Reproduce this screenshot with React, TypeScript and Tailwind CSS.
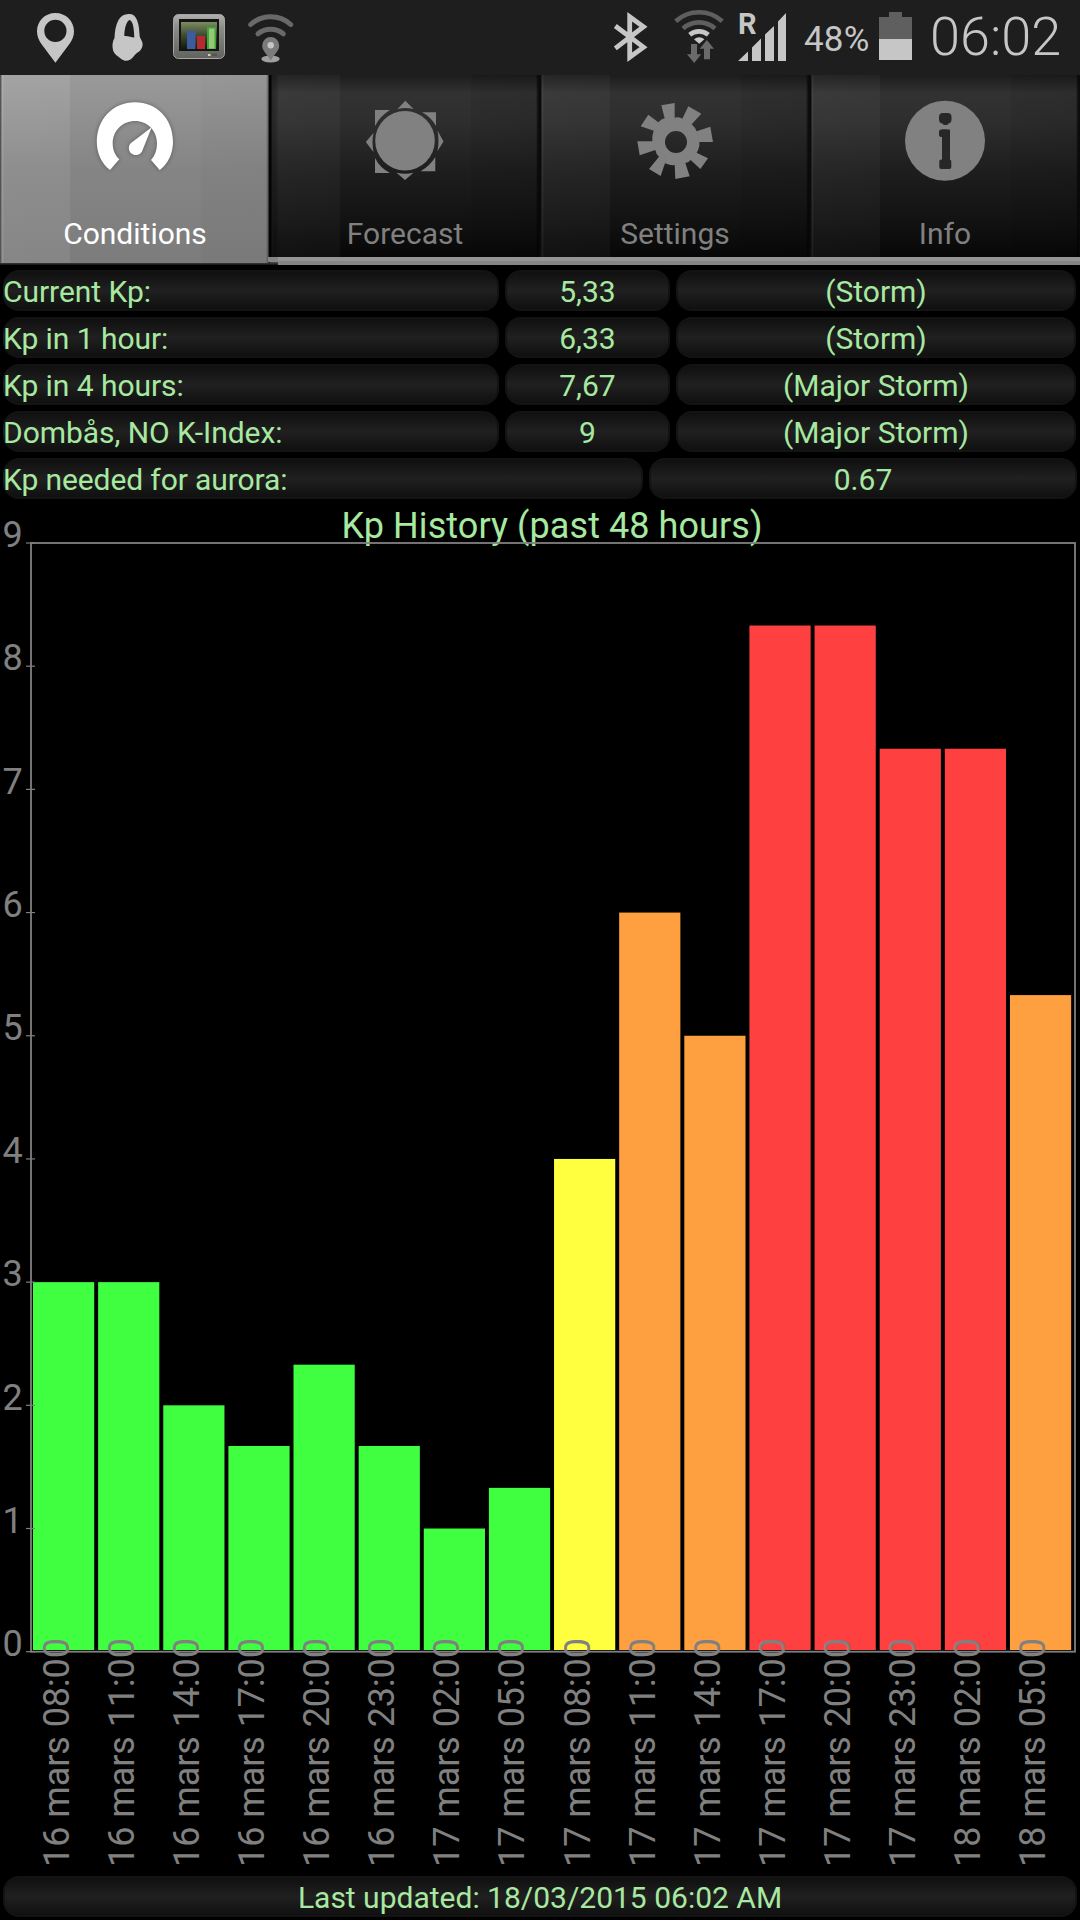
import type { ReactNode } from 'react'
import { clsx } from 'clsx'

const history = [
  { label: '16 mars 08:00', kp: 3 },
  { label: '16 mars 11:00', kp: 3 },
  { label: '16 mars 14:00', kp: 2 },
  { label: '16 mars 17:00', kp: 1.67 },
  { label: '16 mars 20:00', kp: 2.33 },
  { label: '16 mars 23:00', kp: 1.67 },
  { label: '17 mars 02:00', kp: 1 },
  { label: '17 mars 05:00', kp: 1.33 },
  { label: '17 mars 08:00', kp: 4 },
  { label: '17 mars 11:00', kp: 6 },
  { label: '17 mars 14:00', kp: 5 },
  { label: '17 mars 17:00', kp: 8.33 },
  { label: '17 mars 20:00', kp: 8.33 },
  { label: '17 mars 23:00', kp: 7.33 },
  { label: '18 mars 02:00', kp: 7.33 },
  { label: '18 mars 05:00', kp: 5.33 },
]

const readings = [
  { label: 'Current Kp:', value: '5,33', level: '(Storm)' },
  { label: 'Kp in 1 hour:', value: '6,33', level: '(Storm)' },
  { label: 'Kp in 4 hours:', value: '7,67', level: '(Major Storm)' },
  { label: 'Dombås, NO K-Index:', value: '9', level: '(Major Storm)' },
]

function barColor(kp: number) {
  if (kp >= 7) return '#ff4040'
  if (kp >= 5) return '#ffa040'
  if (kp >= 4) return '#ffff40'
  return '#40ff40'
}

function StatusBar() {
  return (
    <header className="flex h-[75px] items-start bg-[#1e1e1e] text-[#c6c6c6]">
      {/* location pin */}
      <svg className="ml-9 shrink-0" width="40" height="75" viewBox="36 0 40 75">
        <path
          fill="#c6c6c6"
          fillRule="evenodd"
          d="M55.4 13C45 13 37 21 37 31.4c0 5 2 9 4.400 12.600L55.400 62.700l14-18.700c2.600-3.600 4.600-7.600 4.600-12.600C74 21 65.800 13 55.400 13zm0 6.800a11.100 11.100 0 1 1 0 22.200a11.100 11.100 0 0 1 0-22.200z"
        />
      </svg>
      <svg className="ml-8 shrink-0" width="40" height="75" viewBox="108 0 40 75">
        <path
          fill="#c6c6c6"
          fillRule="evenodd"
          d="M130 14c-5-.6-9 1.500-11.500 6c-3 5.500-3.700 11.500-4 18c-2 3-2.600 8-1.500 12c1 4 4 5.500 7 8c3.500 3 6.500 3.600 10 1.800c3-2 4.500-5 7.500-7.300c4-2 5.500-6 5-9.500c-.6-2.500-2-4-2.800-6.500c-.5-6-.5-11-2.700-16.500c-1.400-3.500-3.500-5.600-7-6zM129.500 20c3 1 4.500 6 4.800 17.500c-3.500 0-5.500-1.800-10-1.500c.2-7 1.700-14.500 5.200-16z"
        />
      </svg>
      {/* system monitor */}
      <svg className="ml-6 shrink-0" width="54" height="75" viewBox="172 0 54 75">
        <defs>
          <linearGradient id="bezel" x1="0" y1="0" x2="0" y2="1">
            <stop offset="0" stopColor="#b0b0ad" />
            <stop offset="0.3" stopColor="#8b8b87" />
            <stop offset="1" stopColor="#62625f" />
          </linearGradient>
          <linearGradient id="screen" x1="0" y1="0" x2="0" y2="1">
            <stop offset="0" stopColor="#7c8a64" />
            <stop offset="0.5" stopColor="#3e4a2e" />
            <stop offset="1" stopColor="#12180c" />
          </linearGradient>
        </defs>
        <rect x="173.500" y="14.500" width="51" height="44" rx="5" fill="url(#bezel)" stroke="#a5a5a2" />
        <rect x="179" y="19" width="40" height="32" fill="#141414" />
        <rect x="181" y="22" width="36" height="27" fill="url(#screen)" />
        <rect x="187" y="31" width="8.500" height="18" fill="#3c5c9e" />
        <rect x="197" y="36" width="8" height="13" fill="#b52a32" />
        <rect x="207" y="27" width="9" height="22" fill="#3fa535" />
        <rect x="209" y="28.500" width="5.500" height="20" fill="#93c878" />
        <rect x="208" y="54" width="2.500" height="2" fill="#bde08a" />
        <rect x="212" y="53.500" width="5" height="2.500" fill="#555" />
      </svg>
      {/* wifi location */}
      <svg className="ml-5 shrink-0" width="50" height="75" viewBox="246 0 50 75">
        <g fill="none" stroke="#696969" strokeWidth="5" strokeLinecap="round">
          <path d="M250.700 24.500a30 30 0 0 1 40 0" />
          <path d="M258 33.800a20 20 0 0 1 25.300 0" />
        </g>
        <ellipse cx="270.500" cy="59" rx="9.200" ry="3.400" fill="#a0a0a0" />
        <path fill="#7b7b7b" d="M270.700 37a8.500 8.500 0 0 0-8.500 8.500c0 5.500 4.500 8 8.500 15c4-7 8.500-9.500 8.500-15a8.500 8.500 0 0 0-8.500-8.500z" />
        <circle cx="270.700" cy="45.300" r="3.200" fill="#c6c6c6" />
      </svg>
      {/* bluetooth */}
      <svg className="ml-auto shrink-0" width="44" height="75" viewBox="608 0 44 75">
        <path fill="none" stroke="#c6c6c6" strokeWidth="4.800" d="M615.300 26L643.500 47.200L629.700 57.300V16.700L643.500 26.700L615.300 48.300" />
      </svg>
      <svg className="ml-[18px] shrink-0" width="56" height="75" viewBox="670 0 56 75">
        <g fill="none" strokeWidth="4.600">
          <path stroke="#5f5f5f" d="M675.700 21.300a34.500 34.500 0 0 1 46.600 0" />
          <path stroke="#5f5f5f" d="M683 28.500a24 24 0 0 1 32 0" />
          <path stroke="#c6c6c6" d="M689.700 34.800a14.500 14.500 0 0 1 18.600 0" />
        </g>
        <path fill="#c6c6c6" d="M694 39.200q5.200-3.800 10.400 0l-5.200 4.500z" />
        <path fill="#6a6a6a" d="M691 44h6v10.300h4.200L694.200 63L687 54.300h4zM704 59.300V48.800h-4.200L706.800 40l7.200 8.800h-4v10.500z" />
      </svg>
      <svg className="ml-[10px] shrink-0" width="52" height="75" viewBox="736 0 52 75">
        <text x="738" y="33.700" className="font-[Roboto,sans-serif] text-[29px] font-bold" fill="#c6c6c6">R</text>
        <path fill="#c6c6c6" d="M738 61l10-9.500V61zM752 61V47.500l9-9V61zM765 61V34.500l9-8.500V61zM778 61V21.500l8-8.500V61z" />
      </svg>
      <span className="ml-[16px] mt-[19px] w-[67px] font-[Roboto,sans-serif] text-[35px] leading-[41px] tracking-[0.2px]">48%</span>
      <svg className="ml-2 shrink-0" width="34" height="75" viewBox="879 0 34 75">
        <path fill="#5f5f5f" d="M879 17h10v-5h13v5h10v22h-33z" />
        <rect x="879" y="39" width="33" height="21" fill="#c6c6c6" />
      </svg>
      <span className="ml-[17px] mt-[5px] w-[150px] font-[Roboto,sans-serif] text-[54px] font-light leading-[64px]">06:02</span>
    </header>
  )
}

function GaugeIcon() {
  return (
    <svg width="92" height="92" viewBox="89 95 92 92" className="drop-shadow-[0_0_2px_rgba(0,0,0,0.35)]">
      <path
        fill="#fff"
        d="M110 170C101.500 163.500 96.800 153 96.800 142C96.800 119 113 102.300 135 102.300S173 119 173 142C173 153 168.300 163.500 159.700 170L151 160C155 155.500 157 150 157 143.500C157 130.500 147.500 121 135 121S112.700 130.500 112.700 143.500C112.700 150 115 155 119.300 159.300Z"
      />
      <path fill="#fff" d="M151.700 127.300L132 142.200A7 7 0 1 0 142.400 150.500Z" />
    </svg>
  )
}

function SunIcon() {
  return (
    <svg width="92" height="92" viewBox="359 95 92 92" fill="#818181">
      <circle cx="405" cy="140.700" r="29.800" />
      <path d="M405.300 100.800L413.500 108.900Q405.500 107.200 397.500 108.900ZM375 110H390Q380 116 375 126ZM436 112.300V126Q431 117 422 112.300ZM365.800 142L373.500 133Q371.500 142 373.500 152ZM443.500 141.500L437.500 130.500Q439.500 141 437.500 151ZM375 173V158Q380 168 390 173ZM435.300 171.200H420.500Q430 166 435.300 157ZM405 180L396.500 172.800Q405 174.500 413.500 172.800Z" />
    </svg>
  )
}

function GearIcon() {
  return (
    <svg width="92" height="92" viewBox="27 15 276 276" fill="#818181">
      {/* eight slanted teeth round a ring */}
      <path
        fillRule="evenodd"
        d="M124 46L164 39V83Q176 80 187 86L205 49L244 71L215 103Q225 112 230 124L271 110L279 156H238Q240 172 230 188L264 205L241 237L212 210Q206 218 196 219L209 259L166 267L164 225Q148 227 135 220L122 258L87 237L117 200Q108 193 106 180L59 196L52 154H97Q95 138 101 122L62 109L85 74L115 97Q124 87 134 85ZM168 123a33 33 0 1 0 0 66a33 33 0 1 0 0-66z"
      />
    </svg>
  )
}

function InfoIcon() {
  return (
    <svg width="92" height="92" viewBox="899 95 92 92">
      <circle cx="945" cy="140.800" r="40" fill="#818181" />
      <g fill="#272727">
        <rect x="939" y="113" width="12.500" height="10.500" rx="4" />
        <rect x="942.500" y="120" width="6" height="5" rx="2" />
        <rect x="942" y="129.500" width="8" height="38" />
        <rect x="939" y="129.500" width="9" height="7.500" rx="2" />
        <rect x="939.300" y="159.500" width="12" height="9.500" rx="2" />
      </g>
    </svg>
  )
}

const tabs = [
  { label: 'Conditions', icon: GaugeIcon, active: true },
  { label: 'Forecast', icon: SunIcon },
  { label: 'Settings', icon: GearIcon },
  { label: 'Info', icon: InfoIcon },
]

function TabBar() {
  return (
    <nav className="relative grid h-[190px] grid-cols-4 bg-black">
      {tabs.map(({ label, icon: Icon, active }) => (
        <div
          key={label}
          className={clsx(
            'relative flex flex-col items-center',
            active
              ? 'z-10 h-[188px] bg-linear-to-b from-[#a0a0a0] via-[#8a8a8a] to-[#818181] text-white'
              : 'h-[182px] bg-[linear-gradient(#1c1c1c,#323232_10%,#2e2e2e_25%,#1e1e1e_52%,#121212_80%,#070707)] text-[#808080]'
          )}
        >
          {/* vertical sheen bands */}
          <div className={clsx(
            'absolute inset-0',
            active
              ? 'bg-[linear-gradient(90deg,#555_1px,#ffffff30_2px,#ffffff0a_4px,#ffffff08_70px,#0000000a_70px,#0000000a_201px,#0000000f_201px,#00000010_266px,#0005_268px,#111_269px)]'
              : 'bg-[linear-gradient(90deg,#0a0a0a_1px,#ffffff1a_2px,#ffffff0a_4px,#ffffff08_70px,#0000_70px,#0000_201px,#00000012_201px,#0000001a_266px,#000a_268px,#0a0a0a_270px)]'
          )} />
          <div className="relative mt-5"><Icon /></div>
          <span className="relative mt-[29px] font-[Roboto,sans-serif] text-[30px] leading-[35px]">{label}</span>
        </div>
      ))}
      <div className="absolute bottom-0 left-0 h-[3px] w-[278px] bg-linear-to-b from-[#555] to-[#111]" />
      <div className="absolute bottom-0 left-[278px] right-0 z-10 h-2 border-t-4 border-[#959595] bg-[#858585]" />
      <div className="absolute left-[269px] top-0 z-10 h-[182px] w-[9px] bg-linear-to-r from-black/80 via-black/30 to-black/10" />
      <div className="absolute bottom-[3px] left-[268px] z-10 h-[5px] w-[10px] bg-[#858585]" />
    </nav>
  )
}

function Pill({ className, children }: { className?: string; children: ReactNode }) {
  return (
    <div
      className={clsx(
        'flex h-[41px] items-center rounded-[16px] border-2 border-[#131313] bg-linear-to-b from-[#101010] via-[#202020] to-[#101010] font-[Roboto,sans-serif] text-[30px] leading-[35px] text-[#a7e9a0]',
        className
      )}
    >
      <span className="pt-0.5">{children}</span>
    </div>
  )
}

const PLOT = { left: 31, right: 1075, top: 543, bottom: 1651.7 }
const UNIT = (PLOT.bottom - PLOT.top) / 9
const PITCH = 65.13

function KpChart() {
  return (
    <svg className="block font-[Roboto,sans-serif] text-[36px]" width="1080" height="1377" viewBox="0 499 1080 1377">
      <text x="552" y="537.500" textAnchor="middle" fill="#a7e9a0" textLength="421" lengthAdjust="spacing">
        Kp History (past 48 hours)
      </text>
      {history.map(({ label, kp }, i) => (
        <rect
          key={label}
          x={33 + i * PITCH}
          y={PLOT.bottom - kp * UNIT}
          width={61.2}
          height={kp * UNIT - 1.7}
          fill={barColor(kp)}
        />
      ))}
      <rect
        x={PLOT.left}
        y={PLOT.top}
        width={PLOT.right - PLOT.left}
        height={PLOT.bottom - PLOT.top}
        fill="none"
        stroke="#808080"
        strokeWidth="1.800"
      />
      {Array.from({ length: 10 }, (_, n) => {
        const y = PLOT.bottom - n * UNIT
        return (
          <g key={n}>
            <line x1="26" x2="35" y1={y} y2={y} stroke="#808080" strokeWidth="1.200" />
            <text x="12.700" y={y + 4.2} textAnchor="middle" fill="#808080">{n}</text>
          </g>
        )
      })}
      {history.map(({ label }, i) => (
        <text
          key={label}
          transform={`translate(${69 + i * 65.07} 1867) rotate(-90)`}
          fill="#808080"
          textLength="229"
          lengthAdjust="spacing"
        >
          {label}
        </text>
      ))}
    </svg>
  )
}

export default function App() {
  return (
    <main className="flex h-[1920px] w-[1080px] flex-col overflow-hidden bg-black">
      <StatusBar />
      <TabBar />
      <section className="flex flex-col gap-1.5 px-[3px] pt-[5px]">
        {readings.map((r) => (
          <div key={r.label} className="flex gap-1.5">
            <Pill className="w-[496px] border-l-0 tracking-[-0.05px]">{r.label}</Pill>
            <Pill className="w-[165px] justify-center">{r.value}</Pill>
            <Pill className="w-[400px] justify-center">{r.level}</Pill>
          </div>
        ))}
        <div className="flex gap-1.5">
          <Pill className="w-[640px] border-l-0 tracking-[-0.1px]">Kp needed for aurora:</Pill>
          <Pill className="w-[428px] justify-center">0.67</Pill>
        </div>
      </section>
      <KpChart />
      <footer className="px-[3px]">
        <Pill className="justify-center">Last updated: 18/03/2015 06:02 AM</Pill>
      </footer>
    </main>
  )
}
